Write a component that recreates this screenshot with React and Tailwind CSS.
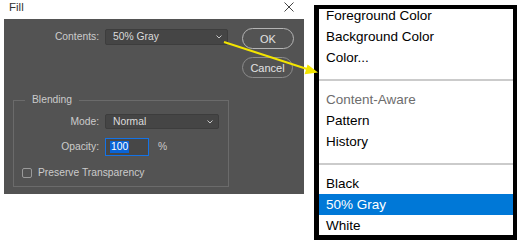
import React from "react";

const Chevron = () => (
  <svg width="6" height="4" viewBox="0 0 6 4" className="shrink-0">
    <polyline points="0.5,0.5 3,3 5.5,0.5" fill="none" stroke="#c8c8c8" strokeWidth="1" />
  </svg>
);

const Select = ({ value, className }) => (
  <div
    className={`flex items-center justify-between pl-[7px] pr-[5px] bg-[#454545] border border-[#3d3d3d] rounded-[2px] text-[#dcdcdc] ${className}`}
  >
    <span>{value}</span>
    <Chevron />
  </div>
);

const FillDialog = () => (
  <div className="flex flex-col w-[304px] shrink-0">
    {/* title bar */}
    <div className="flex h-[19px] justify-between items-start pl-[9px] pr-[10px] pt-[2px] text-[11.5px] leading-[11px] text-[#333]">
      <span>Fill</span>
      <svg width="10" height="10" viewBox="0 0 10 10" className="mt-[0px]">
        <path d="M0.5 0.5 L9.5 9.5 M9.5 0.5 L0.5 9.5" stroke="#444" strokeWidth="1" />
      </svg>
    </div>

    <div className="ml-[4px] w-[300px] h-[175px] bg-[#535353] flex pt-[9px] text-[10.3px] leading-[12px] text-[#cbcbcb]">
      <div className="flex flex-col pl-[9px] w-[225px]">
        {/* Contents */}
        <div className="flex items-center h-[16px] mt-[1px]">
          <span className="w-[86px] text-right">Contents:</span>
          <Select value="50% Gray" className="ml-[6px] w-[123px] h-[16px]" />
        </div>

        {/* Blending group */}
        <fieldset className="mt-[49px] w-[216px] h-[93px] border border-[#6b6b6b]">
          <legend className="ml-[11px] px-[7px] leading-[12px]">Blending</legend>

          <div className="flex items-center h-[15px] mt-[8px]">
            <span className="w-[85px] text-right">Mode:</span>
            <Select value="Normal" className="ml-[6px] w-[114px] h-[15px]" />
          </div>

          <div className="flex items-center h-[18px] mt-[9px]">
            <span className="w-[85px] text-right">Opacity:</span>
            <div className="ml-[6px] w-[44px] h-[18px] flex items-center border border-[#1473e6] bg-[#474747]">
              <span className="ml-[4px] px-[1px] bg-[#0a64d6] text-white leading-[12px]">100</span>
            </div>
            <span className="ml-[9px]">%</span>
          </div>

          <div className="flex items-center mt-[11px] ml-[8px]">
            <div className="w-[10px] h-[10px] border border-[#9a9a9a] rounded-[2px]" />
            <span className="ml-[6px]">Preserve Transparency</span>
          </div>
        </fieldset>
      </div>

      {/* buttons */}
      <div className="flex flex-col ml-[13px] text-[11px] text-[#e2e2e2]">
        <button className="w-[52px] h-[21px] rounded-full border border-[#b4b4b4]">OK</button>
        <button className="mt-[8px] w-[51px] h-[21px] rounded-full border border-[#8c8c8c]">Cancel</button>
      </div>
    </div>
  </div>
);

const items = [
  { label: "Foreground Color" },
  { label: "Background Color" },
  { label: "Color..." },
  { sep: true },
  { label: "Content-Aware", disabled: true },
  { label: "Pattern" },
  { label: "History" },
  { sep: true },
  { label: "Black" },
  { label: "50% Gray", active: true },
  { label: "White" },
];

const ContentsMenu = () => (
  <div className="ml-[10px] mt-[5px] w-[203px] h-[235px] shrink-0 overflow-hidden bg-white border-[4px] border-l-[5px] border-b-[5px] border-black">
    <div className="-mt-[4px] text-[13.5px] leading-[21px]">
      {items.map((item, i) =>
        item.sep ? (
          <div key={i} className="h-[21px] pt-[11px]">
            <div className="h-[2px] bg-[#cbcbcb]" />
          </div>
        ) : (
          <div
            key={i}
            className={`h-[21px] pl-[7px] ${
              item.active
                ? "bg-[#0078d7] text-white"
                : item.disabled
                ? "text-[#6d6d6d]"
                : "text-black"
            }`}
          >
            {item.label}
          </div>
        )
      )}
    </div>
  </div>
);

// yellow pointer from the Contents dropdown to the open list
const Arrow = () => (
  <svg className="absolute inset-0 pointer-events-none" width="522" height="243">
    <line x1="224" y1="42" x2="307" y2="69" stroke="#f3e500" strokeWidth="2" />
    <polygon points="318,72.6 304.6,74.2 307.6,64.6" fill="#f3e500" />
  </svg>
);

export default function App() {
  return (
    <div className="relative flex items-start w-[522px] h-[243px] overflow-hidden bg-white font-['Liberation_Sans',Arial,sans-serif]">
      <FillDialog />
      <ContentsMenu />
      <Arrow />
    </div>
  );
}
